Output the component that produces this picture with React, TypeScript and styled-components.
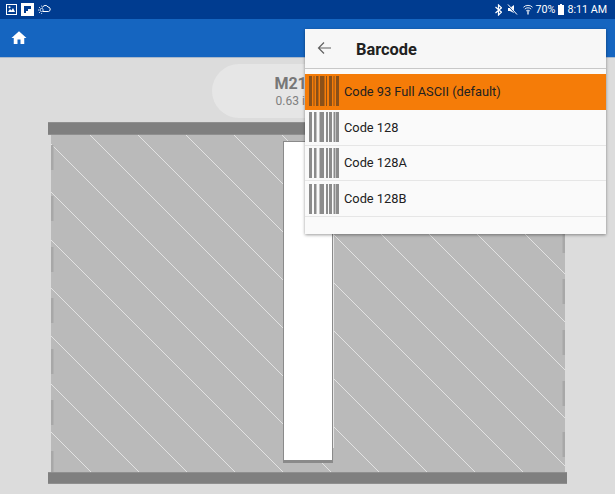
import React from "react";
import styled, { createGlobalStyle } from "styled-components";

const Global = createGlobalStyle`
  html, body { margin: 0; padding: 0; background: #dcdcdc; }
  body { font-family: Roboto, "Liberation Sans", sans-serif; }
`;

const Screen = styled.div`
  position: relative;
  width: 615px;
  height: 494px;
  overflow: hidden;
  display: flex;
  flex-direction: column;
  background: #dcdcdc;
`;

const StatusBar = styled.header`
  height: 19px;
  flex: none;
  display: flex;
  align-items: center;
  background: #003c90;
  color: #fff;
  font-size: 10.7px;
  padding: 0 8px 0 6px;
`;

const StatusGroup = styled.div`
  display: flex;
  align-items: center;
  gap: 4px;
`;

const StatusRight = styled.div`
  margin-left: auto;
  display: flex;
  align-items: center;
`;

const StatusText = styled.span<{ $gap?: number }>`
  line-height: 19px;
  margin-left: ${(p) => p.$gap ?? 0}px;
  white-space: nowrap;
`;

const AppBar = styled.div`
  height: 38px;
  flex: none;
  display: flex;
  align-items: center;
  padding-left: 10px;
  background: #1565c0;
  border-bottom: 1px solid #a9b8cb;
  box-sizing: content-box;
`;

const Main = styled.main`
  flex: 1;
  display: flex;
  flex-direction: column;
  padding: 6px 48px 0;
`;

const Pill = styled.div`
  align-self: center;
  width: 191px;
  height: 54px;
  margin-bottom: 4px;
  border-radius: 27px;
  background: #e6e6e6;
  display: flex;
  flex-direction: column;
  align-items: center;
  justify-content: center;
`;

const PillTitle = styled.div`
  font-size: 16px;
  line-height: 20px;
  font-weight: 700;
  color: #777;
`;

const PillSub = styled.div`
  font-size: 12px;
  line-height: 15px;
  color: #808080;
`;

const Edge = styled.div<{ $h: number }>`
  height: ${(p) => p.$h}px;
  box-sizing: border-box;
  flex: none;
  background: #7f7f7f;
  border: 1px solid #8f8f8f;
  border-width: 1px 0;
`;

const Hatch = styled.div`
  position: relative;
  height: 337px;
  margin: 0 2px 0 3px;
  background: #bababa;
`;

const HatchArt = styled.svg`
  display: block;
`;

const Strip = styled.div`
  position: absolute;
  left: 232px;
  top: 6px;
  width: 50px;
  height: 322px;
  box-sizing: border-box;
  background: #fff;
  border: 1px solid #8a8a8a;
  border-bottom-width: 3px;
`;

const Popup = styled.section`
  position: absolute;
  left: 305px;
  top: 29px;
  width: 301px;
  height: 205px;
  display: flex;
  flex-direction: column;
  background: #fafafa;
  box-shadow: 0 1px 3px rgba(0, 0, 0, 0.4);
`;

const PopupHead = styled.div`
  height: 39px;
  flex: none;
  display: flex;
  align-items: center;
  padding-left: 12px;
  background: #f7f7f7;
  border-bottom: 1px solid #c8c8c8;
  margin-bottom: 5px;
`;

const PopupTitle = styled.h2`
  margin: 2px 0 0 24px;
  font-size: 16.4px;
  font-weight: 700;
  color: #212121;
`;

const Row = styled.div<{ $active?: boolean }>`
  height: 35.8px;
  flex: none;
  box-sizing: border-box;
  display: flex;
  align-items: center;
  gap: 5px;
  padding-left: 4px;
  font-size: 12.8px;
  color: #212121;
  background: ${(p) => (p.$active ? "#f57c08" : "transparent")};
  border-bottom: 1px solid ${(p) => (p.$active ? "#f57c08" : "#e6e6e6")};
`;

const Art = styled.svg`
  display: block;
  flex: none;
`;

const plain: [number, number][] = [[0, 3], [5, 2.5], [10.5, 4.5], [17, 2], [20, 3], [24.5, 2], [27, 3]];
const active: [number, number][] = [[0, 3], [4.5, 1], [7, 2.5], [11, 4.5], [17, 1], [20, 3], [24.5, 1], [27, 3]];

const Barcode = ({ isActive }: { isActive?: boolean }) => (
  <Art width="30" height="30" viewBox="0 0 30 30">
    {(isActive ? active : plain).map(([x, w]) => (
      <rect key={x} x={x} y="0" width={w} height="30" fill={isActive ? "#8a5018" : "#8c8c8c"} />
    ))}
  </Art>
);

const rows = ["Code 93 Full ASCII (default)", "Code 128", "Code 128A", "Code 128B"];

const hatchOffsets = Array.from({ length: 19 }, (_, i) => -39 + 48 * (i - 11));
const leftDashes = [10, 61, 112, 163, 214, 265, 316];
const rightDashes = [93, 144, 195, 246, 297];

export default function App() {
  return (
    <Screen>
      <Global />
      <StatusBar>
        <StatusGroup>
          <Art width="11" height="11" viewBox="0 0 11 11">
            <rect x="0.5" y="0.5" width="10" height="10" fill="none" stroke="#fff" />
            <path d="M2 8l2-3 1.5 1.5L7 4l2 4z" fill="#fff" />
            <circle cx="3.5" cy="3.2" r="1" fill="#fff" />
          </Art>
          <Art width="13" height="13" viewBox="0 0 13 13">
            <rect width="13" height="13" fill="#fff" />
            <path d="M3 10V3h7v3H7v2H5v2z" fill="#003c90" />
          </Art>
          <Art width="13" height="11" viewBox="0 0 13 11">
            <path d="M4.5 3.5a3 3 0 0 1 5.5-.5 2.3 2.3 0 0 1 .6 4.5H4.8" fill="none" stroke="#fff" />
            <circle cx="3.6" cy="6" r="1.6" fill="none" stroke="#fff" strokeWidth="0.8" />
            <path d="M1 3l1 1M0 6h1M1 9l1-1M3.6 1.6v1M3.6 9v1" stroke="#fff" strokeWidth="0.8" />
          </Art>
        </StatusGroup>
        <StatusRight>
          <Art width="7" height="12" viewBox="0 0 7 12">
            <path d="M0.5 3l6 5.2L3.5 11V1l3 2.8L0.5 9" fill="none" stroke="#fff" strokeWidth="1.2" />
          </Art>
          <Art width="11" height="11" viewBox="0 0 11 11" style={{ marginLeft: 5 }}>
            <path d="M1 4h2l4-3v8L3 7H1z" fill="#fff" />
            <path d="M0.5 0.5l9 10" stroke="#003c90" strokeWidth="1.4" />
            <path d="M1 0.5l9 10" stroke="#fff" strokeWidth="1" />
          </Art>
          <Art width="10" height="12" viewBox="0 0 11 12" style={{ marginLeft: 5 }}>
            <path d="M0.5 3a7 7 0 0 1 10 0M2 5a5 5 0 0 1 7 0M3.5 7a3 3 0 0 1 4 0" fill="none" stroke="#fff" />
            <path d="M5.5 7v4" stroke="#fff" strokeWidth="1.4" />
          </Art>
          <StatusText $gap={3}>70%</StatusText>
          <Art width="6" height="11" viewBox="0 0 6 11" style={{ marginLeft: 3 }}>
            <path d="M2 0h2v1h2v10H0V1h2z" fill="#fff" />
          </Art>
          <StatusText $gap={3}>8:11 AM</StatusText>
        </StatusRight>
      </StatusBar>
      <AppBar>
        <Art width="18" height="18" viewBox="0 0 24 24">
          <path d="M10 20v-6h4v6h5v-8h3L12 3 2 12h3v8z" fill="#fff" />
        </Art>
      </AppBar>
      <Main>
        <Pill>
          <PillTitle>M21-500</PillTitle>
          <PillSub>0.63 in wide</PillSub>
        </Pill>
        <Edge $h={13} />
        <Hatch>
          <HatchArt width="514" height="337" viewBox="0 0 514 337">
            {hatchOffsets.map((c) => (
              <line key={c} x1="0" y1={c} x2="514" y2={514 + c} stroke="#e2e2e2" strokeWidth="1" />
            ))}
            {leftDashes.map((y) => (
              <rect key={y} x="0" y={y} width="2.5" height="25" fill="#a8a8a8" />
            ))}
            {rightDashes.map((y) => (
              <rect key={y} x="511.5" y={y} width="2.5" height="25" fill="#a8a8a8" />
            ))}
            <line x1="282.5" y1="6" x2="282.5" y2="313" stroke="#e6e6e6" />
          </HatchArt>
          <Strip />
        </Hatch>
        <Edge $h={12} />
      </Main>
      <Popup>
        <PopupHead>
          <Art width="15" height="14" viewBox="0 0 15 14" style={{ marginTop: -2 }}>
            <path d="M14 7H1.5M7 1.5L1.5 7 7 12.5" fill="none" stroke="#616161" strokeWidth="1.2" />
          </Art>
          <PopupTitle>Barcode</PopupTitle>
        </PopupHead>
        {rows.map((label, i) => (
          <Row key={label} $active={i === 0}>
            <Barcode isActive={i === 0} />
            {label}
          </Row>
        ))}
      </Popup>
    </Screen>
  );
}
